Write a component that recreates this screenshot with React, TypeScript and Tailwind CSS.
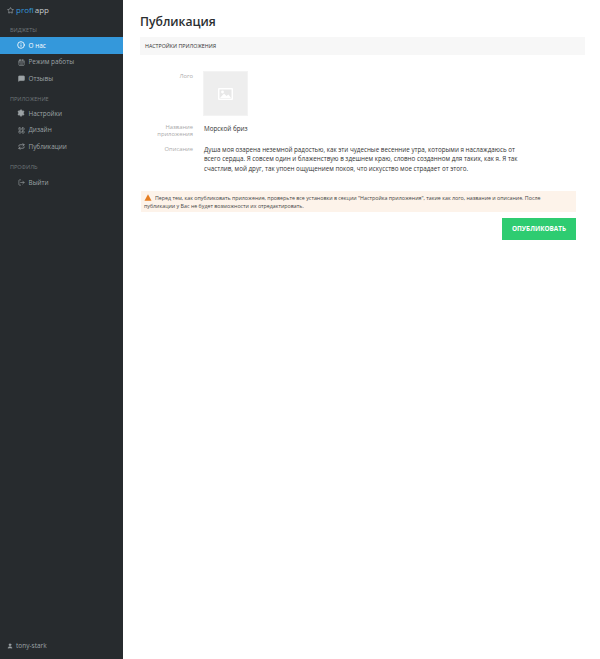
import React from "react";
import { Info, CalendarDays, MessageSquare, Settings, LayoutGrid, Repeat, LogOut, User, Star } from "lucide-react";

function Section({ children }: { children: React.ReactNode }) {
  return <div className="pl-[10px] text-[5.5px] leading-[8px] uppercase text-[#6f7679]">{children}</div>;
}

function Item({ icon, label, active }: { icon: React.ReactNode; label: string; active?: boolean }) {
  return (
    <div className={`flex items-center h-[16.7px] pl-[17px] text-[6.4px] ${active ? "bg-[#3498db] text-white" : "text-[#9da3a6]"}`}>
      <span className="w-[8px] flex justify-center mr-[3.5px]">{icon}</span>
      <span>{label}</span>
    </div>
  );
}

export default function App() {
  return (
    <div className="flex w-[600px] h-[659px] bg-white font-['Open_Sans',sans-serif] overflow-hidden">
      <aside className="w-[123px] h-full bg-[#272b2e] flex flex-col shrink-0">
        <div className="flex items-center h-[20px] pl-[7px] text-[8px]">
          <Star size={7} className="text-[#b5bcc0] mr-[2px]" />
          <span className="text-[#3498db]">profi</span>
          <span className="text-[#c5cacc] ml-[1px]">app</span>
        </div>
        <div className="mt-[6px]"><Section>Виджеты</Section></div>
        <div className="mt-[3px]">
          <Item active icon={<Info size={8} strokeWidth={2.5} />} label="О нас" />
          <Item icon={<CalendarDays size={7} />} label="Режим работы" />
          <Item icon={<MessageSquare size={7} fill="currentColor" />} label="Отзывы" />
        </div>
        <div className="mt-[8px]"><Section>Приложение</Section></div>
        <div className="mt-[2px]">
          <Item icon={<Settings size={8} fill="currentColor" />} label="Настройки" />
          <Item icon={<LayoutGrid size={7} />} label="Дизайн" />
          <Item icon={<Repeat size={7} strokeWidth={2.5} />} label="Публикации" />
        </div>
        <div className="mt-[8.3px]"><Section>Профиль</Section></div>
        <div className="mt-[2.6px]">
          <Item icon={<LogOut size={7} />} label="Выйти" />
        </div>
        <div className="mt-auto mb-[8px] pl-[7px] flex items-center text-[6.5px] text-[#9da3a6]">
          <User size={6} fill="currentColor" className="mr-[3px]" />
          <span>tony-stark</span>
        </div>
      </aside>
      <main className="flex-1 pl-[17px]">
        <h1 className="mt-[12px] text-[12.2px] leading-[20px] font-semibold text-[#2b2f31]">Публикация</h1>
        <div className="mt-[5px] h-[18px] w-[445px] pl-[5px] pt-[1px] flex items-center bg-[#f7f7f7] text-[5.3px] uppercase text-[#333]">
          Настройки приложения
        </div>
        <div className="mt-[16px] flex">
          <div className="w-[53px] text-right text-[5.8px] text-[#aaa] pt-[1px]">Лого</div>
          <div className="ml-[10px] w-[45px] h-[45px] bg-[#eeeeee] border border-[#f3f3f3] flex items-center justify-center">
            <svg viewBox="0 0 15 12" className="w-[15px] h-[12px]">
              <rect width="15" height="12" rx="1" fill="#fff" />
              <rect x="1.5" y="1.5" width="12" height="9" fill="#e8e8e8" />
              <circle cx="4.5" cy="4" r="1.4" fill="#fff" />
              <path d="M2 10 6 5.5 8.5 8 10.5 6.5 13 10Z" fill="#fff" />
            </svg>
          </div>
        </div>
        <div className="mt-[8px] flex">
          <div className="w-[53px] text-right text-[5.8px] leading-[7px] text-[#aaa]">Название приложения</div>
          <div className="ml-[11px] text-[6.3px] text-[#333] leading-[10px]">Морской бриз</div>
        </div>
        <div className="mt-[7px] flex">
          <div className="w-[53px] text-right text-[5.8px] text-[#aaa] leading-[9px]">Описание</div>
          <div className="ml-[11px] w-[318px] text-[6.25px] leading-[9.3px] text-[#333]">
            Душа моя озарена неземной радостью, как эти чудесные весенние утра, которыми я наслаждаюсь от всего сердца. Я совсем один и блаженствую в здешнем краю, словно созданном для таких, как я. Я так счастлив, мой друг, так упоен ощущением покоя, что искусство мое страдает от этого.
          </div>
        </div>
        <div className="mt-[18.5px] ml-[1px] w-[435px] h-[20.5px] bg-[#fdf3ea] pl-[3px] pr-[20px] pt-[2.5px] text-[5.3px] leading-[8px] text-[#444]">
          <svg viewBox="0 0 10 10" className="inline w-[8px] h-[7px] mr-[3px] align-[-1px]"><path d="M5 .5 10 9.5H0Z" fill="#e67e22" /></svg>
          Перед тем, как опубликовать приложение, проверьте все установки в секции "Настройка приложения", такие как лого, название и описание. После публикации у Вас не будет возможности их отредактировать.
        </div>
        <div className="flex justify-end mt-[6px] ml-[1px] w-[435px]">
          <button className="w-[74px] h-[22px] bg-[#2ecc71] text-white text-[6.4px] font-bold uppercase">Опубликовать</button>
        </div>
      </main>
    </div>
  );
}
